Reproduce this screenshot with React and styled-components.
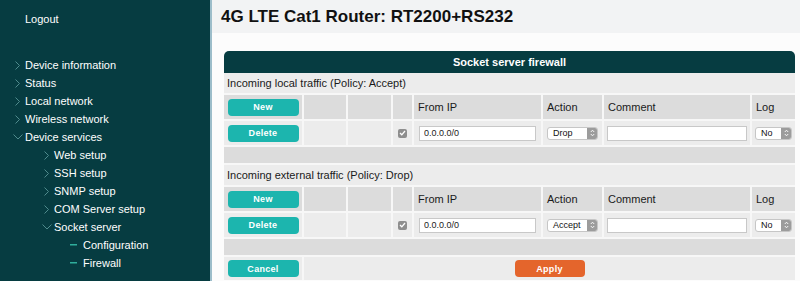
import React from "react";
import styled, { createGlobalStyle } from "styled-components";

const GlobalStyle = createGlobalStyle`
  html, body, #root { height: 100%; }
  body {
    margin: 0;
    font-family: "Liberation Sans", Arial, Helvetica, sans-serif;
    background: #fcfcfc;
  }
  * { box-sizing: border-box; }
`;

const menu = [
  { level: 1, icon: "right", label: "Device information" },
  { level: 1, icon: "right", label: "Status" },
  { level: 1, icon: "right", label: "Local network" },
  { level: 1, icon: "right", label: "Wireless network" },
  { level: 1, icon: "down", label: "Device services" },
  { level: 2, icon: "right", label: "Web setup" },
  { level: 2, icon: "right", label: "SSH setup" },
  { level: 2, icon: "right", label: "SNMP setup" },
  { level: 2, icon: "right", label: "COM Server setup" },
  { level: 2, icon: "down", label: "Socket server" },
  { level: 3, icon: "dash", label: "Configuration" },
  { level: 3, icon: "dash", label: "Firewall" },
];

// one block per traffic direction
const sections = [
  { title: "Incoming local traffic (Policy: Accept)", action: "Drop" },
  { title: "Incoming external traffic (Policy: Drop)", action: "Accept" },
];

const indent = { 1: 15, 2: 44, 3: 70 };

const Page = styled.div`
  display: flex;
  height: 100vh;
  overflow: hidden;
`;

const Sidebar = styled.nav`
  width: 212px;
  flex-shrink: 0;
  background: #063c41;
  border-right: 2px solid #9cbdca;
  color: #fff;
  font-size: 11px;
  padding-top: 12px;
`;

const Logout = styled.div`
  height: 14px;
  line-height: 14px;
  padding-left: 25px;
  margin-bottom: 30px;
`;

const MenuItem = styled.div`
  height: 18px;
  display: flex;
  align-items: center;
  padding-left: ${(p) => indent[p.$level]}px;
`;

const Marker = styled.span`
  width: ${(p) => (p.$dash ? 13 : 10)}px;
  flex-shrink: 0;
  display: flex;
  align-items: center;
`;

const Main = styled.main`
  flex: 1;
  display: flex;
  flex-direction: column;
  min-width: 0;
`;

const TitleBar = styled.header`
  height: 33px;
  background: #f2f3f4;
  padding-left: 9px;
  display: flex;
  align-items: center;
`;

const Title = styled.h1`
  margin: 0;
  font-size: 17px;
  font-weight: 700;
  color: #111;
`;

const Panel = styled.section`
  margin: 18px 5px 0 12px;
`;

const PanelHead = styled.div`
  height: 22px;
  background: #063c41;
  border-radius: 5px 5px 0 0;
  color: #fff;
  font-size: 11px;
  font-weight: 700;
  display: flex;
  align-items: center;
  justify-content: center;
`;

const Grid = styled.div`
  display: grid;
  grid-template-columns: 78px 42px 43px 19px 127px 59px 146px 1fr;
  gap: 2px;
  background: #f7f7f7;
`;

const Cell = styled.div`
  grid-column: ${(p) => p.$span || "auto"};
  height: ${(p) => p.$h || 24}px;
  background: ${(p) => (p.$head ? "#dcdcdc" : "#ececec")};
  display: flex;
  align-items: center;
  justify-content: ${(p) => p.$justify || "flex-start"};
  padding: 0 ${(p) => (p.$pad === undefined ? 4 : p.$pad)}px;
  font-size: 11px;
  color: #1a1a1a;
`;

const Button = styled.button`
  width: ${(p) => p.$w || 71}px;
  height: 17px;
  border: 0;
  border-radius: 4px;
  background: ${(p) => (p.$primary ? "#e4652c" : "#1cb5ae")};
  color: #fff;
  font-family: inherit;
  font-size: 9px;
  font-weight: 700;
  letter-spacing: 0.3px;
  padding: 0;
`;

const TextInput = styled.input`
  width: 100%;
  height: 15px;
  border: 1px solid #c8c8c8;
  background: #fff;
  font-family: inherit;
  font-size: 9px;
  color: #222;
  padding: 0 4px;
  outline: none;
`;

const SelectBox = styled.div`
  width: ${(p) => p.$w}px;
  height: 13px;
  border: 1px solid #c6c6c6;
  border-radius: 3px;
  background: #fff;
  display: flex;
  align-items: center;
  justify-content: space-between;
  font-size: 9px;
  color: #111;
  padding-left: 5px;
  overflow: hidden;
`;

const Stepper = styled.span`
  width: 10px;
  height: 100%;
  background: #9c9c9c;
  display: flex;
  align-items: center;
  justify-content: center;
`;

const Check = styled.span`
  width: 9px;
  height: 9px;
  border-radius: 2px;
  background: #8e8e8e;
  display: flex;
  align-items: center;
  justify-content: center;
`;

const Chevron = ({ dir }) =>
  dir === "down" ? (
    <svg width="10" height="6" viewBox="0 0 10 6" style={{ marginLeft: -2 }}>
      <polyline points="0.5,0.5 5,5 9.5,0.5" fill="none" stroke="#4f8b8d" strokeWidth="1" />
    </svg>
  ) : (
    <svg width="5" height="9" viewBox="0 0 5 9">
      <polyline points="0.5,0.5 4.5,4.5 0.5,8.5" fill="none" stroke="#4f8b8d" strokeWidth="1" />
    </svg>
  );

const Select = ({ value, w }) => (
  <SelectBox $w={w}>
    <span>{value}</span>
    <Stepper>
      <svg width="5" height="8" viewBox="0 0 5 8">
        <polyline points="0.8,3 2.5,1.2 4.2,3" fill="none" stroke="#fff" strokeWidth="0.9" />
        <polyline points="0.8,5 2.5,6.8 4.2,5" fill="none" stroke="#fff" strokeWidth="0.9" />
      </svg>
    </Stepper>
  </SelectBox>
);

const RuleBlock = ({ title, action }) => (
  <>
    <Cell $span="1 / -1" $h={20} $pad={3}>{title}</Cell>

    <Cell $head $justify="center" $pad={0}>
      <Button>New</Button>
    </Cell>
    <Cell $head />
    <Cell $head />
    <Cell $head />
    <Cell $head>From IP</Cell>
    <Cell $head>Action</Cell>
    <Cell $head>Comment</Cell>
    <Cell $head>Log</Cell>

    <Cell $justify="center" $pad={0}>
      <Button>Delete</Button>
    </Cell>
    <Cell />
    <Cell />
    <Cell $justify="center" $pad={0}>
      <Check>
        <svg width="7" height="6" viewBox="0 0 7 6">
          <polyline points="1,3 2.8,4.8 6,1" fill="none" stroke="#fff" strokeWidth="1.3" />
        </svg>
      </Check>
    </Cell>
    <Cell $pad={5}>
      <TextInput defaultValue="0.0.0.0/0" />
    </Cell>
    <Cell>
      <Select value={action} w={51} />
    </Cell>
    <Cell $pad={3}>
      <TextInput defaultValue="" />
    </Cell>
    <Cell $pad={3}>
      <Select value="No" w={37} />
    </Cell>

    <Cell $span="1 / -1" $h={16} $head />
  </>
);

const App = () => {
  return (
    <Page>
      <GlobalStyle />
      <Sidebar>
        <Logout>Logout</Logout>
        {menu.map((item) => (
          <MenuItem key={item.label} $level={item.level}>
            <Marker $dash={item.icon === "dash"}>
              {item.icon === "dash" ? (
                <svg width="7" height="2" viewBox="0 0 7 2">
                  <rect width="7" height="1.5" fill="#2fae9c" />
                </svg>
              ) : (
                <Chevron dir={item.icon} />
              )}
            </Marker>
            {item.label}
          </MenuItem>
        ))}
      </Sidebar>

      <Main>
        <TitleBar>
          <Title>4G LTE Cat1 Router: RT2200+RS232</Title>
        </TitleBar>
        <Panel>
          <PanelHead>Socket server firewall</PanelHead>
          <Grid>
            {sections.map((s) => (
              <RuleBlock key={s.title} title={s.title} action={s.action} />
            ))}
            <Cell $h={23} $justify="center" $pad={0}>
              <Button>Cancel</Button>
            </Cell>
            <Cell $span="2 / -1" $h={23} $justify="center">
              <Button $primary $w={70}>Apply</Button>
            </Cell>
          </Grid>
        </Panel>
      </Main>
    </Page>
  );
};

export default App;
